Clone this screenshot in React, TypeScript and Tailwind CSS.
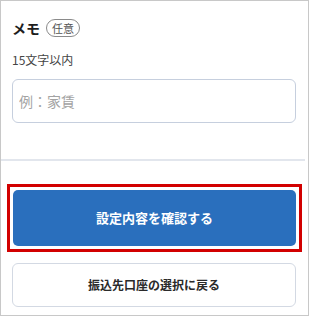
import React from "react"

const font = { fontFamily: '"Noto Sans CJK JP", "Noto Sans", sans-serif' }

const MemoField: React.FC = () => {
	return (
		<div className="pl-[11px] pr-[12px] pt-[17px]">
			<div className="flex items-center gap-[6px] h-[20px]">
				<span className="text-[14px] font-bold text-[#1e1e1e] leading-none">メモ</span>
				<span className="flex items-center justify-center h-[18px] w-[34px] rounded-full border border-[#8a8a8a] text-[11px] text-[#555] leading-none">
					任意
				</span>
			</div>
			<p className="mt-[14px] text-[12px] leading-[16px] text-[#444]">15文字以内</p>
			<input
				className="mt-[11px] w-[284px] h-[44px] rounded-[6px] border border-[#c6cfde] px-[6px] text-[14px] text-[#222] placeholder:text-[#a3a3a3] outline-none"
				placeholder="例：家賃"
				style={font}
			/>
		</div>
	)
}

export default function App() {
	return (
		<div className="w-[309px] h-[316px] border border-[#c8c8c8] bg-white overflow-hidden" style={font}>
			<MemoField />

			<div className="mt-[36px] mr-[3px] h-[2px] bg-[#e2e6ed]"></div>

			<div className="mt-[23px] ml-[6px] w-[295px] border-[3px] border-[#d20000] p-[3px]">
				<button className="w-full h-[56px] rounded-[5px] bg-[#2a6fbd] text-white text-[13px] font-bold">
					設定内容を確認する
				</button>
			</div>

			<button className="mt-[11px] ml-[11px] w-[284px] h-[44px] rounded-[6px] border border-[#d3d9e3] bg-white text-[12px] font-bold text-[#2a2a2a]">
				振込先口座の選択に戻る
			</button>
		</div>
	)
}
